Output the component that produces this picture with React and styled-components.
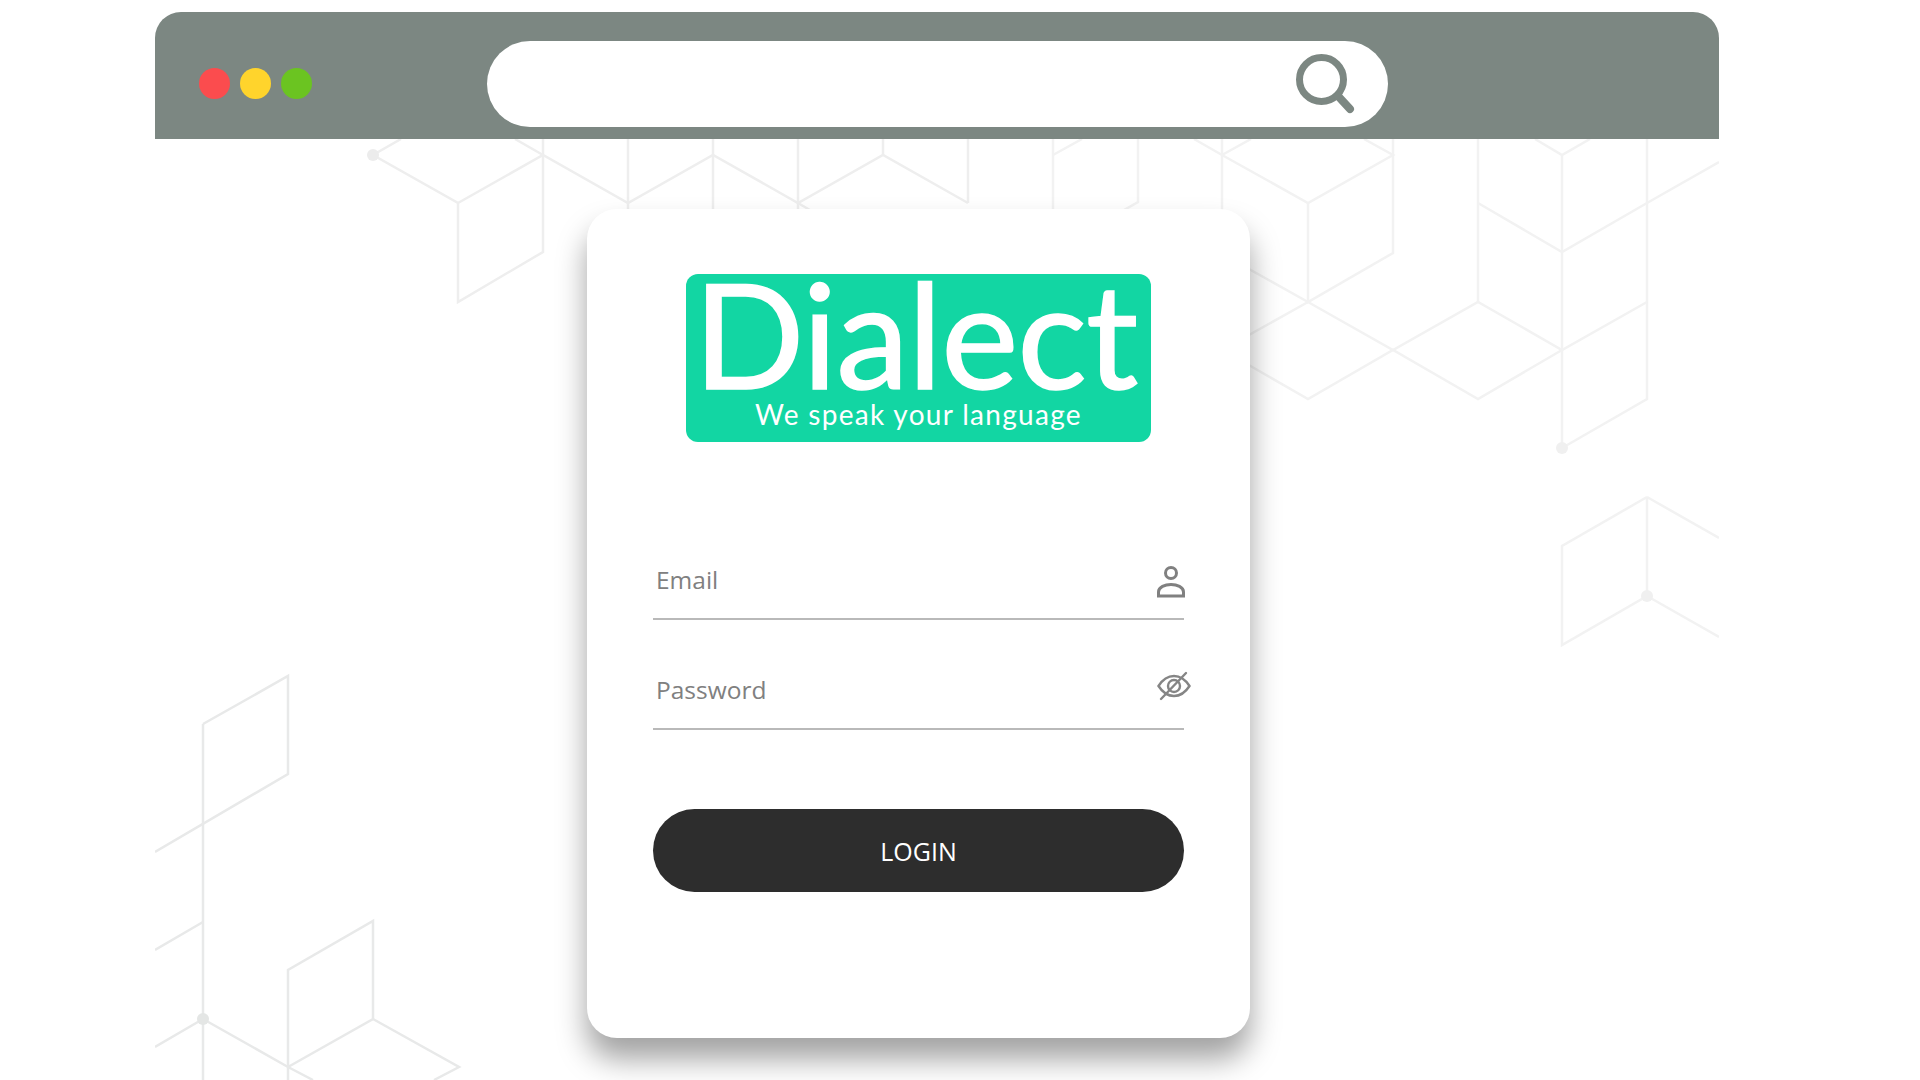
import React from "react";
import styled, { createGlobalStyle } from "styled-components";

const GlobalStyle = createGlobalStyle`
  html, body {
    margin: 0;
    padding: 0;
    background: #fff;
    overflow: hidden;
  }
`;

// hex backdrop, drawn in page pixels (see the viewBox on Backdrop)
const linesTop = [
  "M401 139 L373 155 L458 203 L458 302 L543 252 L543 139",
  "M458 203 L543 155 L628 203 L713 155 L798 203 L883 155 L968 203",
  "M515 139 L543 155",
  "M628 139 V215",
  "M713 139 V215",
  "M798 139 V215",
  "M883 139 V155",
  "M968 139 V203",
  "M798 203 L815 213",
];

const linesRight = [
  "M1053 139 V215",
  "M1053 155 L1082 139",
  "M1138 139 V202 L1110 218",
  "M1222 139 V218",
  "M1194 139 L1222 155 L1308 203 L1393 155 L1364 139",
  "M1222 155 L1251 139",
  "M1393 139 V253 L1308 302 V203",
  "M1478 139 V302",
  "M1478 203 L1562 252 L1647 203 L1719 162",
  "M1535 139 L1562 155 L1590 139",
  "M1562 155 V448",
  "M1647 139 V399 L1562 448",
  "M1240 264 L1308 302 L1393 350 L1478 302 L1562 350 L1647 302",
  "M1308 302 L1240 340",
  "M1240 360 L1308 399 L1393 350 L1478 399 L1562 350",
  "M1647 497 L1562 546 V645 L1647 596 V497",
  "M1647 497 L1719 538",
  "M1647 596 L1719 637",
];

const linesBottom = [
  "M203 724 V1080",
  "M203 724 L288 676 V774 L155 852",
  "M203 922 L155 950",
  "M203 1019 L155 1047",
  "M203 1019 L288 1067 L313 1080",
  "M288 1080 V970 L373 921 V1019 L288 1067",
  "M373 1019 L459 1067 L434 1080",
];

const Page = styled.div`
  width: 1920px;
  height: 1080px;
  padding: 12px 201px 0 155px;
  box-sizing: border-box;
`;

const BrowserWindow = styled.div`
  width: 1564px;
  height: 1068px;
  display: flex;
  flex-direction: column;
`;

const TopBar = styled.header`
  height: 127px;
  flex: none;
  background: #7c8782;
  border-radius: 26px 26px 0 0;
  display: flex;
  align-items: center;
  padding: 0 0 0 44px;
  box-sizing: border-box;
`;

const Dots = styled.div`
  display: flex;
  gap: 10px;
  margin-top: 16px;
  margin-right: 175px;
`;

const Dot = styled.span`
  width: 31px;
  height: 31px;
  border-radius: 50%;
  background: ${(p) => p.$color};
`;

const SearchBar = styled.div`
  width: 901px;
  height: 86px;
  margin-top: 17px;
  background: #fff;
  border-radius: 43px;
  display: flex;
  align-items: center;
  justify-content: flex-end;
  padding-right: 32px;
  box-sizing: border-box;
`;

const SearchIcon = styled.svg`
  width: 60px;
  height: 62px;
  display: block;
`;

const Body = styled.main`
  position: relative;
  flex: 1;
  display: flex;
  padding: 70px 0 0 432px;
  box-sizing: border-box;
  overflow: hidden;
`;

const Backdrop = styled.svg`
  position: absolute;
  left: 0;
  top: 0;
  width: 1564px;
  height: 941px;
`;

const Card = styled.section`
  position: relative;
  width: 663px;
  height: 829px;
  flex: none;
  background: #fff;
  border-radius: 30px;
  box-shadow: 0 21px 30px rgba(0, 0, 0, 0.37);
  padding: 65px 66px 0;
  box-sizing: border-box;
  display: flex;
  flex-direction: column;
  align-items: center;
`;

const Logo = styled.div`
  width: 465px;
  height: 168px;
  flex: none;
  background: #12d6a3;
  border-radius: 12px;
  color: #fff;
  font-family: Lato, "Liberation Sans", sans-serif;
  text-align: center;
`;

const LogoName = styled.div`
  font-size: 146px;
  line-height: 118px;
  font-weight: 400;
  letter-spacing: -1px;
  white-space: nowrap;
  transform: translateX(-3px);
  -webkit-text-stroke: 1.5px #fff;
`;

const LogoTagline = styled.div`
  font-size: 28px;
  line-height: 36px;
  font-weight: 400;
  letter-spacing: 1.3px;
  margin-top: 4px;
  white-space: nowrap;
`;

const Form = styled.form`
  width: 531px;
  margin-top: 109px;
  font-family: "Open Sans", "Liberation Sans", sans-serif;
`;

const Field = styled.label`
  height: ${(p) => p.$height}px;
  box-sizing: border-box;
  border-bottom: 2px solid #b9b9b9;
  display: flex;
  align-items: flex-end;
  justify-content: space-between;
  padding: 0 0 21px 3px;
`;

const FieldText = styled.span`
  font-size: 24.5px;
  line-height: 34px;
  color: #808080;
`;

const FieldIcon = styled.svg`
  display: block;
  flex: none;
  margin-right: ${(p) => p.$right}px;
  margin-bottom: ${(p) => p.$bottom}px;
`;

const LoginButton = styled.button`
  width: 100%;
  height: 83px;
  margin-top: 79px;
  padding: 0;
  border: none;
  border-radius: 42px;
  background: #2d2d2d;
  color: #fff;
  font-family: inherit;
  font-size: 25px;
  display: block;
`;

const PersonIcon = () => (
  <FieldIcon $right={-1} $bottom={-1} width="28" height="32" viewBox="0 0 28 32" fill="none" stroke="#808080" strokeWidth="3">
    <circle cx="14" cy="7" r="5.5" />
    <path d="M1.5 30 L26.5 30 L26.5 26 C26.5 21 20 18.5 14 18.5 C8 18.5 1.5 21 1.5 26 Z" />
  </FieldIcon>
);

const EyeOffIcon = () => (
  <FieldIcon $right={-7} $bottom={6} width="34" height="30" viewBox="0 0 34 30" fill="none" stroke="#858585" strokeWidth="2.4" strokeLinecap="round">
    <path d="M1.5 15 C6 8 11 5 17 5 C23 5 28 8 32.5 15 C28 22 23 25 17 25 C11 25 6 22 1.5 15 Z" />
    <circle cx="17" cy="15" r="6" />
    <path d="M4 28 L29 2" />
  </FieldIcon>
);

export default function App() {
  return (
    <Page>
      <GlobalStyle />
      <BrowserWindow>
        <TopBar>
          <Dots>
            <Dot $color="#fb4c4e" />
            <Dot $color="#ffd42c" />
            <Dot $color="#6bc421" />
          </Dots>
          <SearchBar>
            <SearchIcon viewBox="0 0 60 62" fill="none" stroke="#7c8782">
              <circle cx="25.5" cy="26.5" r="22" strokeWidth="7" />
              <path d="M42 43 L54 56" strokeWidth="8" strokeLinecap="round" />
            </SearchIcon>
          </SearchBar>
        </TopBar>
        <Body>
          <Backdrop viewBox="155 139 1564 941" fill="none" strokeWidth="2.5">
            <g stroke="#eeeeee">
              {linesTop.map((d) => (
                <path key={d} d={d} />
              ))}
              <circle cx="373" cy="155" r="6" fill="#ececec" stroke="none" />
            </g>
            <g stroke="#f2f2f2">
              {linesRight.map((d) => (
                <path key={d} d={d} />
              ))}
              <circle cx="1562" cy="448" r="6" fill="#f0f0f0" stroke="none" />
              <circle cx="1647" cy="596" r="6" fill="#f0f0f0" stroke="none" />
            </g>
            <g stroke="#e8e9e9">
              {linesBottom.map((d) => (
                <path key={d} d={d} />
              ))}
              <circle cx="203" cy="1019" r="6" fill="#e4e6e5" stroke="none" />
            </g>
          </Backdrop>
          <Card>
            <Logo>
              <LogoName>Dialect</LogoName>
              <LogoTagline>We speak your language</LogoTagline>
            </Logo>
            <Form>
              <Field $height={69}>
                <FieldText>Email</FieldText>
                <PersonIcon />
              </Field>
              <Field $height={110}>
                <FieldText>Password</FieldText>
                <EyeOffIcon />
              </Field>
              <LoginButton type="button">LOGIN</LoginButton>
            </Form>
          </Card>
        </Body>
      </BrowserWindow>
    </Page>
  );
}
